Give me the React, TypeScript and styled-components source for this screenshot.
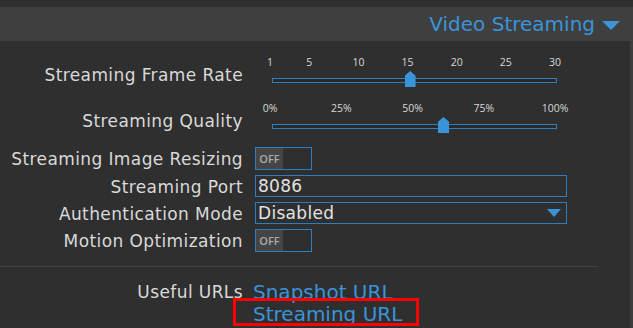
import React from 'react';
import styled, { createGlobalStyle } from 'styled-components';

const BLUE = '#3a94da';
const BORDER_BLUE = '#2f7dbd';

const GlobalStyle = createGlobalStyle`
  html, body, #root { height: 100%; }
  body { margin: 0; background: #2f2f2f; font-family: "DejaVu Sans", "Open Sans", sans-serif; overflow: hidden; }
`;

const Page = styled.div`
  min-height: 100%;
  display: flex;
  flex-direction: column;
  padding-top: 7px;
  box-sizing: border-box;
`;

const Header = styled.div`
  flex: none;
  height: 34px;
  background: #3f3f3f;
  display: flex;
  align-items: center;
  justify-content: flex-end;
  gap: 7px;
  padding-right: 13px;
  color: ${BLUE};
  font-size: 20px;
`;

const HeaderCaret = styled.span`
  width: 0;
  height: 0;
  border-left: 9px solid transparent;
  border-right: 9px solid transparent;
  border-top: 9px solid ${BLUE};
  margin-top: 2px;
`;

const Body = styled.div`
  flex: 1 0 auto;
  border-right: 3px solid #3d3d3d;
  padding-top: 14px;
  display: flex;
  flex-direction: column;
`;

const Row = styled.div<{ $gap?: number }>`
  display: grid;
  grid-template-columns: 243px 1fr;
  column-gap: 12px;
  align-items: center;
  margin-bottom: ${({ $gap }) => $gap ?? 5}px;
`;

const Label = styled.div<{ $slider?: boolean }>`
  text-align: right;
  color: #d9d9d9;
  font-size: 17px;
  letter-spacing: 0.4px;
  line-height: 20px;
  white-space: nowrap;
  align-self: ${({ $slider }) => ($slider ? 'start' : 'center')};
  margin-top: ${({ $slider }) => ($slider ? '10px' : '1px')};
`;

const SliderBox = styled.div`
  position: relative;
  width: 285px;
  height: 32px;
  margin-left: 17px;
`;

const Tick = styled.span`
  position: absolute;
  top: 0;
  transform: translateX(-50%);
  margin-left: -2px;
  color: #d8d8d8;
  font-family: "Open Sans", sans-serif;
  font-size: 10.5px;
  line-height: 14px;
`;

const Track = styled.div`
  position: absolute;
  left: 0;
  right: 0;
  top: 23px;
  height: 5px;
  box-sizing: border-box;
  border: 1px solid ${BORDER_BLUE};
  background: #2a2a2a;
`;

const Thumb = styled.div`
  position: absolute;
  top: 16px;
  width: 11px;
  height: 16px;
  margin-left: -5px;
  background: ${BLUE};
  clip-path: polygon(50% 0, 100% 30%, 100% 100%, 0 100%, 0 30%);
`;

const Toggle = styled.div`
  width: 57px;
  height: 23px;
  box-sizing: border-box;
  border: 1px solid ${BORDER_BLUE};
  display: flex;
`;

const ToggleKnob = styled.span`
  width: 27px;
  background: #454545;
  color: #ababab;
  font-family: "Open Sans", sans-serif;
  font-size: 11px;
  font-weight: 600;
  display: flex;
  align-items: center;
  justify-content: center;
`;

const Field = styled.div`
  width: 312px;
  height: 22px;
  box-sizing: border-box;
  border: 1px solid ${BORDER_BLUE};
  color: #e2e2e2;
  font-size: 17px;
  letter-spacing: 0.3px;
  line-height: 20px;
  padding: 0 0 0 2px;
  display: flex;
  align-items: center;
  justify-content: space-between;
`;

const FieldCaret = styled.span`
  width: 0;
  height: 0;
  border-left: 7px solid transparent;
  border-right: 7px solid transparent;
  border-top: 8px solid ${BLUE};
  margin-right: 5px;
`;

const Divider = styled.hr`
  border: none;
  border-top: 1px solid #424242;
  margin: 9px 32px 14px 0;
`;

const Links = styled.div`
  display: flex;
  flex-direction: column;
  align-items: flex-start;
`;

const Link = styled.a<{ $marked?: boolean }>`
  position: relative;
  color: ${BLUE};
  font-size: 20px;
  line-height: 22px;
  text-decoration: none;
  margin-left: -2px;
  &::after {
    content: '';
    display: ${({ $marked }) => ($marked ? 'block' : 'none')};
    position: absolute;
    left: -20px;
    right: -17px;
    top: -5px;
    bottom: -1px;
    border: 3px solid #ff0000;
  }
`;

const UrlLabel = styled(Label)`
  align-self: start;
  line-height: 22px;
  margin-top: 0;
`;

const Slider: React.FC<{ ticks: { v: number; t: string }[]; min: number; max: number; value: number }> = ({
  ticks,
  min,
  max,
  value,
}) => {
  const pct = (v: number) => `${((v - min) / (max - min)) * 100}%`;
  return (
    <SliderBox>
      {ticks.map((k) => (
        <Tick key={k.t} style={{ left: pct(k.v) }}>
          {k.t}
        </Tick>
      ))}
      <Track />
      <Thumb style={{ left: pct(value) }} />
    </SliderBox>
  );
};

const OffSwitch = () => (
  <Toggle>
    <ToggleKnob>OFF</ToggleKnob>
  </Toggle>
);

const App: React.FC = () => {
  const fps = [1, 5, 10, 15, 20, 25, 30].map((v) => ({ v, t: String(v) }));
  const quality = [0, 25, 50, 75, 100].map((v) => ({ v, t: `${v}%` }));
  return (
    <Page>
      <GlobalStyle />
      <Header>
        Video Streaming
        <HeaderCaret />
      </Header>
      <Body>
        <Row $gap={14}>
          <Label $slider>Streaming Frame Rate</Label>
          <Slider ticks={fps} min={1} max={30} value={15} />
        </Row>
        <Row $gap={14}>
          <Label $slider>Streaming Quality</Label>
          <Slider ticks={quality} min={0} max={100} value={60} />
        </Row>
        <Row>
          <Label>Streaming Image Resizing</Label>
          <OffSwitch />
        </Row>
        <Row>
          <Label>Streaming Port</Label>
          <Field>8086</Field>
        </Row>
        <Row>
          <Label>Authentication Mode</Label>
          <Field>
            Disabled
            <FieldCaret />
          </Field>
        </Row>
        <Row>
          <Label>Motion Optimization</Label>
          <OffSwitch />
        </Row>
        <Divider />
        <Row>
          <UrlLabel>Useful URLs</UrlLabel>
          <Links>
            <Link href="#">Snapshot URL</Link>
            <Link href="#" $marked>
              Streaming URL
            </Link>
          </Links>
        </Row>
      </Body>
    </Page>
  );
};

export default App;
